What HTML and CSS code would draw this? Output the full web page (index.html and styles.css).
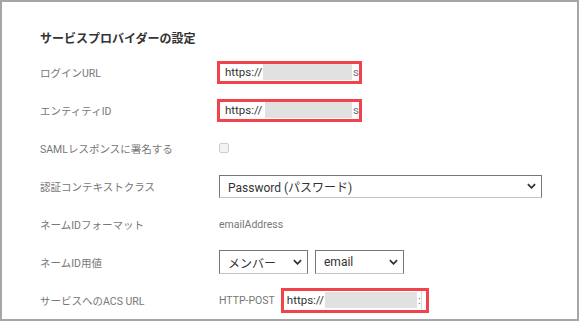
FILE: index.html
```html
<!DOCTYPE html>
<html lang="ja">
<head>
    <meta charset="UTF-8">
    <meta name="viewport" content="width=device-width, initial-scale=1.0">
    <title>サービスプロバイダーの設定</title>
    <link rel="stylesheet" href="styles.css">
</head>
<body>
    <div class="panel">
        <h2 class="title">サービスプロバイダーの設定</h2>

        <div class="row">
            <span class="label">ログインURL</span>
            <span class="mark mark-url">https://<span class="blur"></span><span class="tail">s</span></span>
        </div>

        <div class="row">
            <span class="label">エンティティID</span>
            <span class="mark mark-url">https://<span class="blur blur-shift"></span><span class="tail">s</span></span>
        </div>

        <div class="row">
            <span class="label">SAMLレスポンスに署名する</span>
            <span class="checkbox"></span>
        </div>

        <div class="row">
            <span class="label">認証コンテキストクラス</span>
            <div class="select select-wide">
                <span>Password (パスワード)</span>
                <svg class="chevron" viewBox="0 0 10 6"><path d="M1 1 L5 5 L9 1"/></svg>
            </div>
        </div>

        <div class="row">
            <span class="label">ネームIDフォーマット</span>
            <span class="text">emailAddress</span>
        </div>

        <div class="row">
            <span class="label">ネームID用値</span>
            <div class="select-group">
                <div class="select">
                    <span>メンバー</span>
                    <svg class="chevron" viewBox="0 0 10 6"><path d="M1 1 L5 5 L9 1"/></svg>
                </div>
                <div class="select">
                    <span>email</span>
                    <svg class="chevron" viewBox="0 0 10 6"><path d="M1 1 L5 5 L9 1"/></svg>
                </div>
            </div>
        </div>

        <div class="row">
            <span class="label">サービスへのACS URL</span>
            <span class="text">HTTP-POST</span>
            <span class="mark mark-acs"><span class="inner">https://<span class="blur blur-acs"></span><span class="tail">:</span></span></span>
        </div>
    </div>
</body>
</html>
```

FILE: styles.css
```css
body {
    margin: 0;
    font-family: Roboto, "Noto Sans CJK JP", sans-serif;
    background-color: white;
}

.panel {
    box-sizing: border-box;
    width: 579px;
    height: 321px;
    border: 2px solid #a6a6a6;
    padding: 27px 0 0 38px;
    overflow: hidden;
}

.title {
    margin: 0 0 4px;
    font-size: 12px;
    line-height: 20px;
    font-weight: bold;
    color: #333;
}

.row {
    display: flex;
    align-items: center;
    height: 38px;
}

.label {
    flex: none;
    width: 179px;
    font-size: 10.5px;
    color: #777;
}

.text {
    font-size: 10.5px;
    color: #777;
}

.mark {
    box-sizing: border-box;
    display: inline-flex;
    align-items: center;
    border: 3px solid #f0434b;
    font-size: 11.5px;
    color: #333;
    overflow: hidden;
    white-space: nowrap;
}

.mark-url {
    width: 145px;
    height: 23px;
    margin-left: -2px;
    padding-left: 5px;
}

.mark-acs {
    width: 148px;
    height: 25px;
    margin-left: 6px;
    padding-right: 4px;
}

.mark-acs .inner {
    display: flex;
    align-items: center;
    height: 100%;
    flex: 1;
    padding-left: 3px;
    border-right: 1px solid #dcdcdc;
}

.blur {
    display: inline-block;
    width: 90px;
    height: 16px;
    margin-left: 1px;
    background-color: #e1e1e1;
}

.blur-shift {
    width: 88px;
    margin-left: 3px;
}

.blur-acs {
    width: 92px;
    margin-left: 1px;
}

.tail {
    margin-left: 1px;
    color: #6b7180;
}

.checkbox {
    box-sizing: border-box;
    width: 10px;
    height: 10px;
    border: 1px solid #cfcfcf;
    border-radius: 2px;
    background-color: #f4f4f4;
}

.select {
    box-sizing: border-box;
    display: flex;
    align-items: center;
    justify-content: space-between;
    width: 89px;
    height: 24px;
    padding: 0 5px 0 8px;
    border: 1px solid #777;
    border-bottom-color: #c4c4c4;
    font-size: 12px;
    color: #333;
    background-color: white;
}

.select-wide {
    width: 323px;
    height: 23px;
}

.select-group {
    display: flex;
    gap: 7px;
}

.chevron {
    width: 9px;
    height: 6px;
    fill: none;
    stroke: #333;
    stroke-width: 2;
}
```
